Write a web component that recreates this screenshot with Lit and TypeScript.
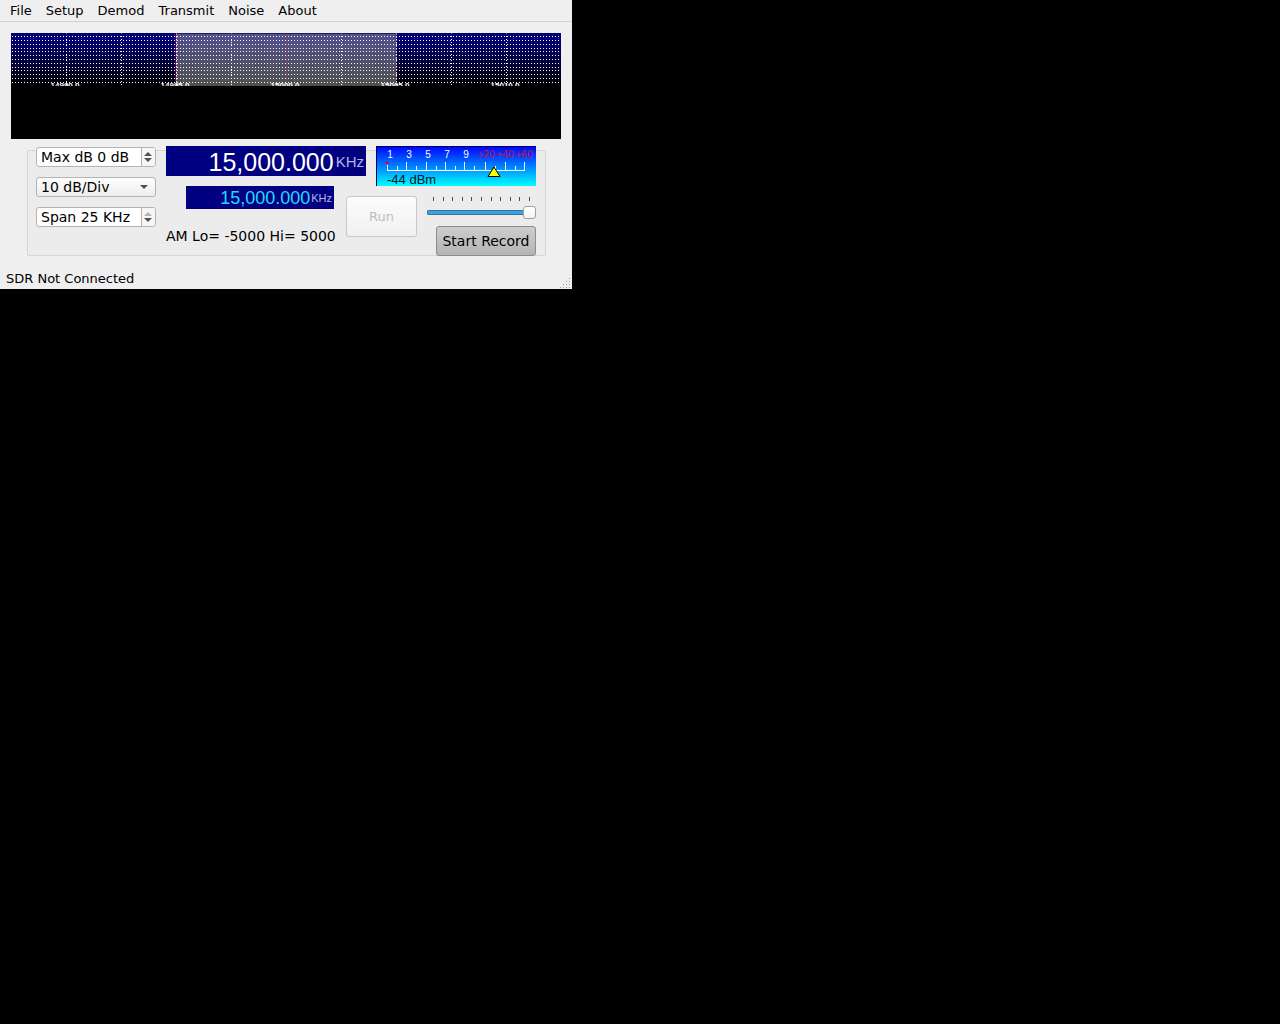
import { LitElement, html, svg, css } from "lit";
import { customElement, state } from "lit/decorators.js";

const range = (n: number) => Array.from({ length: n }, (_, i) => i);

/** Panadapter: dotted grid over a blue fade, with the pass band shaded. */
@customElement("sdr-spectrum")
class SdrSpectrum extends LitElement {
  static styles = css`
    :host { display: block; background: #000; }
    .plot { display: block; width: 100%; height: auto; }
    .grid { stroke: #fff; stroke-width: 1; stroke-dasharray: 1 2; }
    .edge { stroke: #ff78c8; }
    .label { font: bold 8px "Liberation Sans", Arial, sans-serif; fill: #fff; text-anchor: middle; }
  `;
  render() {
    const rows = range(13).map((i) => Math.floor(((i + 1) * 53) / 14) + 0.5);
    const cols = [1, 2, 3, 4, 6, 7, 8, 9].map((i) => i * 55 + 0.5);
    const labels = ["14990.0", "14995.0", "15000.0", "15005.0", "15010.0"];
    return html`
      <svg class="plot" viewBox="0 0 550 106" role="img" aria-label="Spectrum" shape-rendering="crispEdges">
        <defs>
          <linearGradient id="fade" x1="0" y1="0" x2="0" y2="1">
            <stop offset="0" stop-color="#000080"></stop>
            <stop offset="1" stop-color="#000"></stop>
          </linearGradient>
          <clipPath id="scope"><rect width="550" height="53"></rect></clipPath>
        </defs>
        <rect width="550" height="106" fill="#000"></rect>
        <g clip-path="url(#scope)">
          <rect width="550" height="53" fill="url(#fade)"></rect>
          <rect x="165" width="220" height="53" fill="#a0a0a0" fill-opacity="0.5"></rect>
          <path d="M164.5 0V53" stroke="#50005a" stroke-width="1"></path>
          ${rows.map((y) => svg`<path class="grid" d="M1 ${y}H550"></path>`)}
          ${cols.map((x) => svg`<path class="grid" d="M${x} 0V53"></path>`)}
          <path d="M275.5 0V53" stroke="#824664" stroke-width="1"></path>
          <path class="grid edge" stroke-dashoffset="-1" d="M165.5 0V53M385.5 0V53"></path>
          ${labels.map((t, i) => svg`<text class="label" x=${54 + i * 110} y="55">${t}</text>`)}
        </g>
        <path d="M0 0.5H550" stroke="#000028" stroke-opacity="0.6"></path>
      </svg>
    `;
  }
}

/** S-meter scale with peak marker and level pointer. */
@customElement("sdr-meter")
class SdrMeter extends LitElement {
  static styles = css`
    :host { display: block; }
    .face { display: block; width: 100%; height: auto; overflow: visible; }
    .unit { font: 10px "Liberation Sans", Arial, sans-serif; fill: #fff; text-anchor: middle; }
    .over { fill: #c8143c; }
    .level { font: 13px "Liberation Sans", Arial, sans-serif; fill: #001428; }
  `;
  render() {
    const units = ["1", "3", "5", "7", "9"];
    const over = ["+20", "+40", "+60"];
    const major = [11, 30, 50, 69, 88, 109, 129, 148];
    const minor = [21, 40, 60, 79, 98, 119, 139];
    return html`
      <svg class="face" viewBox="0 0 160 40" role="img" aria-label="Signal level">
        <defs>
          <linearGradient id="sky" x1="0" y1="0" x2="0" y2="1">
            <stop offset="0" stop-color="#0000ff"></stop>
            <stop offset="1" stop-color="#00ffff"></stop>
          </linearGradient>
        </defs>
        <rect width="160" height="40" fill="url(#sky)"></rect>
        <path d="M0.5 40V0.5H160" fill="none" stroke="#000050"></path>
        ${units.map((t, i) => svg`<text class="unit" x=${14 + i * 19} y="12">${t}</text>`)}
        ${over.map((t, i) => svg`<text class="unit over" x=${110 + i * 19} y="12">${t}</text>`)}
        <g fill="none" stroke="#fff" shape-rendering="crispEdges">
          <path d="M11 24.5H149"></path>
          ${major.map((x) => svg`<path d="M${x + 0.5} 16V25"></path>`)}
          ${minor.map((x) => svg`<path d="M${x + 0.5} 20V25"></path>`)}
        </g>
        <path d="M9.5 16.5H12.5L11.5 18.5Z" fill="#f00" stroke="#dc0028"></path>
        <path d="M118 21L124 30.5H112Z" fill="#ff0" stroke="#000"></path>
        <text class="level" x="11" y="38">-44 dBm</text>
      </svg>
    `;
  }
}

@customElement("app-root")
class AppRoot extends LitElement {
  @state() private volume = 100;

  static styles = css`
    :host { display: block; min-height: 100vh; background: #000; color: #000; }
    * { box-sizing: border-box; }
    .window {
      max-width: 572px; display: flex; flex-direction: column;
      background: #efefef; font: 13px/15px "DejaVu Sans", sans-serif;
    }
    button, input, select { font: inherit; color: inherit; margin: 0; }
    .menubar { display: flex; gap: 14px; padding: 3px 10px; border-bottom: 1px solid #d2d2d2; }
    .menu { padding: 0; border: 0; background: none; }
    .scope { margin: 11px 11px 0; }
    .group { margin: 11px 26px 0 27px; padding: 0 9px 0 8px; border: 1px solid #d6d6d6; border-radius: 2px; background: #ececec; }
    .panel { display: flex; justify-content: space-between; margin: -5px 0 -1px; font-size: 14px; line-height: 18px; }
    .settings { display: flex; flex-direction: column; gap: 10px; width: 120px; padding-top: 1px; }
    .spin { display: flex; height: 20px; border: 1px solid #b4b4b4; border-radius: 3px; background: #fff; overflow: hidden; }
    .value { flex: 1; min-width: 0; padding: 0 4px; border: 0; background: none; }
    .steps { display: flex; flex-direction: column; width: 14px; border-left: 1px solid #b4b4b4; background: #f6f6f6; }
    .step { flex: 1; display: flex; justify-content: center; padding: 1px 2px 1px 0; border: 0; background: none; color: #505050; }
    .up { align-items: flex-end; }
    .down { align-items: flex-start; }
    .step:disabled { color: #b4b4b4; }
    .combo { display: grid; align-items: center; }
    .choice { grid-area: 1 / 1; appearance: none; width: 100%; height: 20px; padding: 0 4px; border: 1px solid #b4b4b4; border-radius: 3px; background: linear-gradient(#fdfdfd, #eeeeee); }
    .caret { grid-area: 1 / 1; justify-self: end; margin-right: 8px; pointer-events: none; }
    .radio { display: flex; flex-direction: column; width: 370px; }
    .top { display: flex; justify-content: space-between; align-items: flex-start; }
    .freq { display: flex; justify-content: flex-end; align-items: center; padding: 2px 2px 0 0; background: #000080; font-family: "Liberation Sans", Arial, sans-serif; }
    .main { width: 200px; height: 30px; gap: 2px; font-size: 25px; line-height: 28px; color: #fff; }
    .demod { width: 148px; height: 23px; margin-left: 20px; gap: 1px; font-size: 18px; line-height: 21px; color: #1edcff; }
    .khz { color: #b4b4e6; font-size: 15px; }
    .demod .khz { font-size: 11px; }
    .meter { width: 160px; }
    .bottom { display: flex; gap: 10px; align-items: flex-start; }
    .tuning { display: flex; flex-direction: column; gap: 18px; width: 170px; white-space: nowrap; }
    .run { width: 71px; height: 41px; margin-top: 10px; border: 1px solid #c8c8c8; border-radius: 3px; background: linear-gradient(#fcfcfc, #f1f1f1); color: #bebebe; font-size: 13px; }
    .audio { flex: 1; display: flex; flex-direction: column; align-items: flex-end; padding-top: 10px; }
    .ticks { display: block; width: 100%; height: auto; }
    .slider { appearance: none; width: 100%; height: 14px; margin: 3px 0 7px; background: none; }
    .slider::-webkit-slider-runnable-track { height: 5px; box-shadow: inset 0 0 0 1px #2a78aa; border-radius: 2px; background: #46a0d7; }
    .slider::-webkit-slider-thumb { appearance: none; box-sizing: border-box; width: 13px; height: 13px; margin-top: -4px; border: 1px solid #a0a0a0; border-radius: 3px; background: linear-gradient(#fff, #f4f4f4); }
    .record { width: 100px; height: 30px; padding: 0; border: 1px solid #8c8c8c; border-radius: 3px; background: linear-gradient(#cdcdcd, #b4b4b4); white-space: nowrap; }
    .status { display: flex; justify-content: space-between; align-items: flex-end; padding: 15px 2px 1px 6px; }
    .message { padding-bottom: 2px; }
    .grip { display: block; }
  `;

  private spin(label: string, value: string, atMax: boolean) {
    return html`
      <div class="spin">
        <input class="value" type="text" aria-label=${label} .value=${value} />
        <div class="steps">
          <button class="step up" aria-label="Increase ${label}" ?disabled=${atMax}>
            <svg width="8" height="4" viewBox="0 0 8 4"><path d="M0 4L4 0L8 4Z" fill="currentColor"></path></svg>
          </button>
          <button class="step down" aria-label="Decrease ${label}">
            <svg width="8" height="4" viewBox="0 0 8 4"><path d="M0 0L4 4L8 0Z" fill="currentColor"></path></svg>
          </button>
        </div>
      </div>
    `;
  }

  render() {
    const menus = ["File", "Setup", "Demod", "Transmit", "Noise", "About"];
    return html`
      <main class="window">
        <nav class="menubar">${menus.map((m) => html`<button class="menu">${m}</button>`)}</nav>
        <sdr-spectrum class="scope"></sdr-spectrum>
        <section class="group">
          <div class="panel">
            <div class="settings">
              ${this.spin("Max dB", "Max dB 0 dB", false)}
              <div class="combo">
                <select class="choice" aria-label="Vertical scale"><option>10 dB/Div</option></select>
                <svg class="caret" width="8" height="4" viewBox="0 0 8 4"><path d="M0 0L4 4L8 0Z" fill="#505050"></path></svg>
              </div>
              ${this.spin("Span", "Span 25 KHz", true)}
            </div>
            <div class="radio">
              <div class="top">
                <div class="freq main"><span>15,000.000</span><span class="khz">KHz</span></div>
                <sdr-meter class="meter"></sdr-meter>
              </div>
              <div class="bottom">
                <div class="tuning">
                  <div class="freq demod"><span>15,000.000</span><span class="khz">KHz</span></div>
                  <span>AM Lo= -5000 Hi= 5000</span>
                </div>
                <button class="run" disabled>Run</button>
                <div class="audio">
                  <svg class="ticks" viewBox="0 0 109 6" shape-rendering="crispEdges" aria-hidden="true">
                    ${range(11).map((i) => svg`<path d="M${Math.round(6 + i * 9.6) + 0.5} 1V5" stroke="#2d5069"></path>`)}
                  </svg>
                  <input class="slider" type="range" min="0" max="100" aria-label="Volume"
                    .value=${String(this.volume)}
                    @input=${(e: Event) => (this.volume = Number((e.target as HTMLInputElement).value))} />
                  <button class="record">Start Record</button>
                </div>
              </div>
            </div>
          </div>
        </section>
        <footer class="status">
          <span class="message">SDR Not Connected</span>
          <svg class="grip" width="10" height="10" viewBox="0 0 10 10" shape-rendering="crispEdges" aria-hidden="true">
            ${[0, 1, 2, 3].map((r) =>
              range(r + 1).map((c) => svg`<rect x=${9 - c * 3} y=${r * 3} width="1" height="1" fill="#a0a0a0"></rect>`))}
          </svg>
        </footer>
      </main>
    `;
  }
}
